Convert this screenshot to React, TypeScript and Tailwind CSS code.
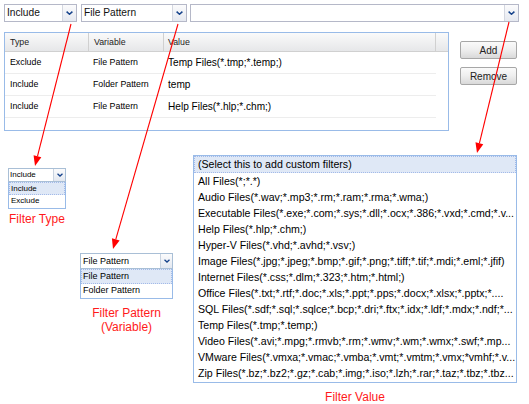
import React from "react";

const FONT = { fontFamily: '"Liberation Sans", Arial, sans-serif' };

function Chevron({ size = 7 }: { size?: number }) {
  return (
    <svg width={size} height={Math.round(size * 0.6)} viewBox="0 0 7 4" className="block">
      <path d="M0.6 0.6 L3.5 3.2 L6.4 0.6" fill="none" stroke="#15428b" strokeWidth="1.5" />
    </svg>
  );
}

function Combo({ text, w, className = "" }: { text: string; w: string; className?: string }) {
  return (
    <div className={`flex h-[18px] border border-[#b5b8c8] bg-white ${w} ${className}`}>
      <div className="flex-1 pl-[2px] text-[10.2px] leading-[16px] text-[#111]">{text}</div>
      <div className="flex w-[14px] items-center justify-center border-l border-[#d4d7e0] bg-gradient-to-b from-[#fbfbfc] to-[#e6e9f0]">
        <Chevron />
      </div>
    </div>
  );
}

const rows = [
  ["Exclude", "File Pattern", "Temp Files(*.tmp;*.temp;)"],
  ["Include", "Folder Pattern", "temp"],
  ["Include", "File Pattern", "Help Files(*.hlp;*.chm;)"],
];

const listItems = [
  "All Files(*;*.*)",
  "Audio Files(*.wav;*.mp3;*.rm;*.ram;*.rma;*.wma;)",
  "Executable Files(*.exe;*.com;*.sys;*.dll;*.ocx;*.386;*.vxd;*.cmd;*.v...",
  "Help Files(*.hlp;*.chm;)",
  "Hyper-V Files(*.vhd;*.avhd;*.vsv;)",
  "Image Files(*.jpg;*.jpeg;*.bmp;*.gif;*.png;*.tiff;*.tif;*.mdi;*.eml;*.jfif)",
  "Internet Files(*.css;*.dlm;*.323;*.htm;*.html;)",
  "Office Files(*.txt;*.rtf;*.doc;*.xls;*.ppt;*.pps;*.docx;*.xlsx;*.pptx;*....",
  "SQL Files(*.sdf;*.sql;*.sqlce;*.bcp;*.dri;*.ftx;*.idx;*.ldf;*.mdx;*.ndf;*...",
  "Temp Files(*.tmp;*.temp;)",
  "Video Files(*.avi;*.mpg;*.rmvb;*.rm;*.wmv;*.wm;*.wmx;*.swf;*.mp...",
  "VMware Files(*.vmxa;*.vmac;*.vmba;*.vmt;*.vmtm;*.vmx;*vmhf;*.v...",
  "Zip Files(*.bz;*.bz2;*.gz;*.cab;*.img;*.iso;*.lzh;*.rar;*.taz;*.tbz;*.tbz...",
];

function Button({ label }: { label: string }) {
  return (
    <div className="flex h-[18px] w-[57px] items-center justify-center rounded-[2px] border border-[#a7a7a7] bg-gradient-to-b from-[#fafafa] via-[#eeeeee] to-[#d9d9d9] text-[10px] text-[#222]">
      {label}
    </div>
  );
}

function Arrows() {
  const lines = [
    [71, 24, 35, 166],
    [178, 24, 113, 249],
    [509, 22, 477, 153],
  ];
  return (
    <svg className="pointer-events-none absolute left-0 top-0" width="529" height="404" viewBox="0 0 529 404">
      {lines.map(([x1, y1, x2, y2], i) => {
        const dx = x2 - x1;
        const dy = y2 - y1;
        const len = Math.hypot(dx, dy);
        const ux = dx / len;
        const uy = dy / len;
        const hl = 10;
        const hw = 4;
        const bx = x2 - ux * hl;
        const by = y2 - uy * hl;
        const px = -uy;
        const py = ux;
        const pts = `${x2},${y2} ${bx + px * hw},${by + py * hw} ${bx - px * hw},${by - py * hw}`;
        return (
          <g key={i}>
            <line x1={x1} y1={y1} x2={bx} y2={by} stroke="#ff0000" strokeWidth="1.1" />
            <polygon points={pts} fill="#ff0000" />
          </g>
        );
      })}
    </svg>
  );
}

export default function App() {
  return (
    <div className="relative h-[404px] w-[529px] overflow-hidden bg-white text-black" style={FONT}>
      {/* top combos */}
      <div className="flex pl-[4px] pt-[4px]">
        <Combo text="Include" w="w-[73px]" />
        <Combo text="File Pattern" w="w-[106px]" className="ml-[4px]" />
        <Combo text="" w="w-[329px]" className="ml-[3px]" />
      </div>

      {/* table and buttons */}
      <div className="mt-[10px] flex pl-[4px]">
        <div className="h-[99px] w-[445px] border border-[#99bbe8] bg-white">
          <div className="flex h-[19px] border-b border-[#d0d0d0] bg-gradient-to-b from-[#fafafa] to-[#e6e7e9] text-[8.8px] leading-[18px] text-[#222]">
            <div className="w-[84px] border-r border-[#d0d0d0] pl-[5px]">Type</div>
            <div className="w-[75px] border-r border-[#d0d0d0] pl-[5px]">Variable</div>
            <div className="w-[272px] border-r border-[#d0d0d0] pl-[4px]">Value</div>
            <div className="flex-1" />
          </div>
          {rows.map((r, i) => (
            <div key={i} className="flex h-[22px] w-[431px] items-center border-b border-[#ededed]">
              <div className="w-[84px] pl-[5px] text-[8.8px]">{r[0]}</div>
              <div className="w-[75px] pl-[4px] text-[8.8px]">{r[1]}</div>
              <div className="flex-1 pl-[4px] text-[10.1px]">{r[2]}</div>
            </div>
          ))}
        </div>
        <div className="ml-[11px] flex flex-col gap-[8px] pt-[9px]">
          <Button label="Add" />
          <Button label="Remove" />
        </div>
      </div>

      {/* lower area */}
      <div className="mt-[24px] flex">
        <div className="flex w-[193px] flex-col">
          {/* Filter Type */}
          <div className="ml-[8px] mt-[13px] w-[58px]">
            <div className="flex h-[14px] border border-[#a9bfd6] bg-white">
              <div className="flex-1 pl-[1px] text-[8px] leading-[12px]">Include</div>
              <div className="flex w-[12px] items-center justify-center border-l border-[#c9d3e0] bg-gradient-to-b from-[#fbfbfc] to-[#e3e8f0]">
                <Chevron size={6} />
              </div>
            </div>
            <div className="border border-t-0 border-[#99bbe8] bg-white pb-[1px]">
              <div className="h-[13px] border border-dotted border-[#a3bae9] bg-[#dfe8f6] pl-[1px] text-[8px] leading-[11px]">Include</div>
              <div className="h-[12px] pl-[2px] text-[8px] leading-[12px]">Exclude</div>
            </div>
            <div className="mt-[3px] pl-[1px] text-[12px] leading-[14px] text-[#ff1a1a]">Filter Type</div>
          </div>

          {/* File Pattern */}
          <div className="ml-[80px] mt-[27px] w-[93px]">
            <div className="flex h-[16px] border border-[#a9bfd6] bg-white">
              <div className="flex-1 pl-[2px] text-[9px] leading-[14px]">File Pattern</div>
              <div className="flex w-[12px] items-center justify-center border-l border-[#c9d3e0] bg-gradient-to-b from-[#fbfbfc] to-[#e3e8f0]">
                <Chevron size={6} />
              </div>
            </div>
            <div className="border border-t-0 border-[#99bbe8] bg-white pb-[1px]">
              <div className="h-[15px] border border-dotted border-[#a3bae9] bg-[#dfe8f6] pl-[1px] text-[9px] leading-[13px]">File Pattern</div>
              <div className="h-[13px] pl-[2px] text-[9px] leading-[13px]">Folder Pattern</div>
            </div>
            <div className="mt-[7px] text-center text-[12px] leading-[14px] text-[#ff1a1a]">
              Filter Pattern
              <br />
              (Variable)
            </div>
          </div>
        </div>

        {/* Filter Value list */}
        <div className="flex w-[324px] flex-col">
          <div className="h-[228px] border border-[#99bbe8] bg-white">
            <div className="h-[17px] truncate border border-dotted border-[#a3bae9] bg-[#dfe8f6] pl-[3px] text-[10.6px] leading-[15px]">
              (Select this to add custom filters)
            </div>
            {listItems.map((t, i) => (
              <div key={i} className="h-[16px] truncate pl-[4px] text-[10.6px] leading-[16px]">
                {t}
              </div>
            ))}
          </div>
          <div className="mt-[7px] text-center text-[12px] leading-[14px] text-[#ff1a1a]">Filter Value</div>
        </div>
      </div>

      <Arrows />
    </div>
  );
}
